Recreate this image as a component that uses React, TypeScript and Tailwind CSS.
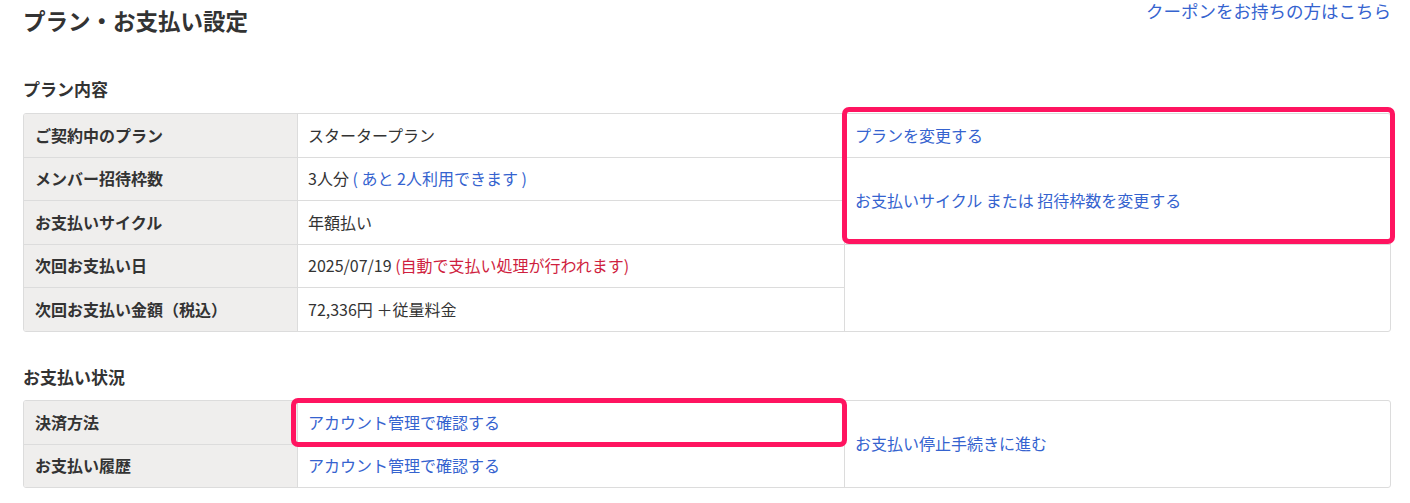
import React from 'react'

const font = { fontFamily: '"Noto Sans CJK JP", "Noto Sans", sans-serif' }

const label = 'flex items-center pl-[11px] pb-[2px] bg-[#efeeed] font-bold text-[#333] border-r border-[#dcdcdc]'
const value = 'flex items-center pl-[10px] pb-[2px] text-[#333] border-r border-[#dcdcdc]'
const link = 'text-[#3563cf]'

export default function App() {
  return (
    <div className="min-h-[503px] bg-white pl-[23px] pr-[19px] text-[16px] leading-[20px]" style={font}>
      <div className="flex items-start justify-between">
        <h1 className="text-[22.5px] leading-[40px] font-bold text-[#333]">プラン・お支払い設定</h1>
        <a className="text-[17.5px] leading-[22px] text-[#3563cf]">クーポンをお持ちの方はこちら</a>
      </div>

      <h2 className="mt-[37px] mb-[12px] text-[17px] leading-[24px] font-bold text-[#333]">プラン内容</h2>
      <div className="relative">
        <div className="grid grid-cols-[274px_547px_1fr] grid-rows-[44px_43px_44px_43px_43px] border border-[#dcdcdc] rounded-[3px] overflow-hidden">
          <div className={`${label} border-b`}>ご契約中のプラン</div>
          <div className={`${value} border-b`}>スタータープラン</div>
          <div className="flex items-center pl-[10px] pb-[2px] border-b border-[#dcdcdc]">
            <span className={link}>プランを変更する</span>
          </div>

          <div className={`${label} border-b`}>メンバー招待枠数</div>
          <div className={`${value} border-b`}>
            3人分&nbsp;<span className={link}>( あと 2人利用できます )</span>
          </div>
          <div className="row-span-2 flex items-center pl-[10px] pb-[2px] border-b border-[#dcdcdc]">
            <span className={link}>お支払いサイクル または 招待枠数を変更する</span>
          </div>

          <div className={`${label} border-b`}>お支払いサイクル</div>
          <div className={`${value} border-b`}>年額払い</div>

          <div className={`${label} border-b`}>次回お支払い日</div>
          <div className={`${value} border-b`}>
            2025/07/19&nbsp;<span className="text-[#cf1f3f]">(自動で支払い処理が行われます)</span>
          </div>
          <div className="row-span-2" />

          <div className={label}>次回お支払い金額（税込）</div>
          <div className={value}>72,336円 ＋従量料金</div>
        </div>
        {/* annotation highlight */}
        <div className="pointer-events-none absolute left-[819px] top-[-6px] w-[553px] h-[137px] border-[5px] border-[#ff1460] rounded-[7px]" />
      </div>

      <h2 className="mt-[33px] mb-[11px] text-[17px] leading-[24px] font-bold text-[#333]">お支払い状況</h2>
      <div className="relative">
        <div className="grid grid-cols-[274px_547px_1fr] grid-rows-[44px_42px] border border-[#dcdcdc] rounded-[3px] overflow-hidden">
          <div className={`${label} border-b`}>決済方法</div>
          <div className={`${value} border-b`}>
            <span className={link}>アカウント管理で確認する</span>
          </div>
          <div className="row-span-2 flex items-center pl-[10px] pb-[2px]">
            <span className={link}>お支払い停止手続きに進む</span>
          </div>

          <div className={label}>お支払い履歴</div>
          <div className={value}>
            <span className={link}>アカウント管理で確認する</span>
          </div>
        </div>
        <div className="pointer-events-none absolute left-[268px] top-[-2px] w-[556px] h-[49px] border-[5px] border-[#ff1460] rounded-[7px]" />
      </div>
    </div>
  )
}
